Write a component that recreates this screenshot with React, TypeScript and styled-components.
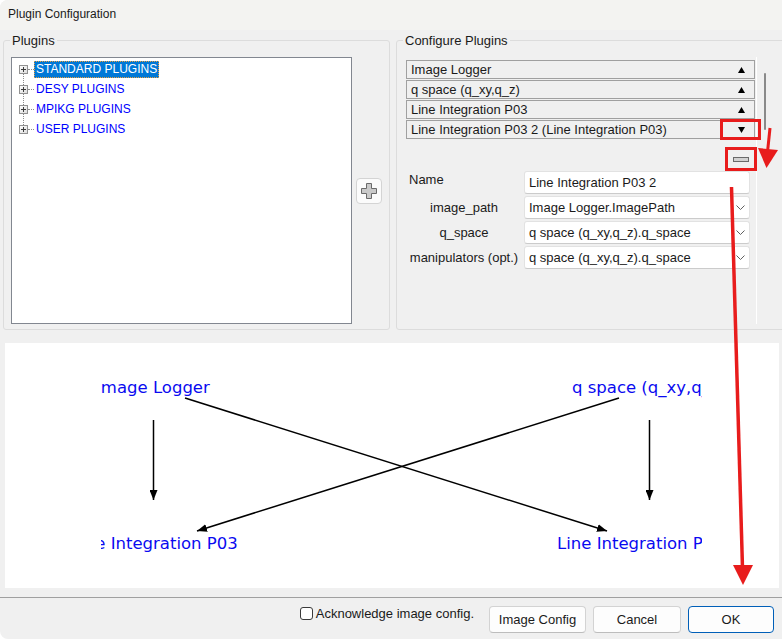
import React from 'react';
import styled, { createGlobalStyle } from 'styled-components';

const GlobalStyle = createGlobalStyle`
  html, body {
    margin: 0;
    padding: 0;
    background: #ffffff;
  }
  body {
    font-family: "Liberation Sans", Arial, sans-serif;
    font-size: 12px;
    color: #1b1b1b;
  }
  * {
    box-sizing: border-box;
  }
`;

const Window = styled.div`
  position: relative;
  width: 782px;
  height: 639px;
  background: #f0f0f0;
  border-radius: 8px 0 0 8px;
  overflow: hidden;
  display: flex;
  flex-direction: column;
`;

const TitleBar = styled.div`
  flex: none;
  height: 30px;
  display: flex;
  align-items: center;
  padding: 0 8px 2px;
  background: #f3f3f1;
  color: #1a1a1a;
`;

const TopRow = styled.div`
  flex: none;
  display: flex;
  gap: 6px;
  padding: 10px 0 0 3px;
`;

const GroupBox = styled.div<{ $width: number }>`
  flex: none;
  width: ${(p) => p.$width}px;
  height: 290px;
  border: 1px solid #dcdcdc;
  border-radius: 3px;
  display: flex;
  flex-direction: column;
  font-size: 13px;
`;

const Legend = styled.div`
  align-self: flex-start;
  margin: -8px 0 0 6px;
  padding: 0 2px;
  line-height: 16px;
  background: #f0f0f0;
  color: #1a1a1a;
`;

const PluginsBody = styled.div`
  display: flex;
  align-items: center;
  gap: 4px;
  padding: 8px 0 0 7px;
`;

const Tree = styled.div`
  width: 341px;
  height: 267px;
  background: #ffffff;
  border: 1px solid #828790;
  padding: 1px 0 0 7px;
  font-size: 12px;
`;

const TreeRow = styled.div`
  position: relative;
  height: 20px;
  display: flex;
  align-items: center;

  &:not(:last-child)::after {
    content: '';
    position: absolute;
    left: 4px;
    top: 15px;
    height: 11px;
    border-left: 1px dotted #8c8c8c;
  }
`;

const Connector = styled.span`
  width: 6px;
  height: 0;
  border-top: 1px dotted #8c8c8c;
`;

const TreeLabel = styled.span<{ $selected?: boolean }>`
  line-height: 17px;
  padding: 0 2px;
  color: ${(p) => (p.$selected ? '#ffffff' : '#0000ff')};
  background: ${(p) => (p.$selected ? '#0078d7' : 'transparent')};
  outline: ${(p) => (p.$selected ? '1px dotted #e8a040' : 'none')};
  outline-offset: -1px;
`;

const ToolButton = styled.button<{ $size: number }>`
  flex: none;
  width: ${(p) => p.$size}px;
  height: ${(p) => p.$size}px;
  padding: 0;
  display: flex;
  align-items: center;
  justify-content: center;
  background: #fbfbfb;
  border: 1px solid #d4d4d4;
  border-radius: 4px;
`;

const FlatButton = styled.button`
  width: 24px;
  height: 24px;
  margin-right: 2px;
  padding: 0;
  display: flex;
  align-items: center;
  justify-content: center;
  background: transparent;
  border: none;
`;

const ConfigureBody = styled.div`
  display: flex;
  align-items: flex-start;
  padding: 8px 0 0 7px;
`;

const ScrollArea = styled.div`
  width: 353px;
  height: 267px;
  padding: 3px 1px 0 2px;
  border-right: 1px solid #ffffff;
  display: flex;
  flex-direction: column;
`;

const ScrollThumb = styled.div`
  width: 2px;
  height: 57px;
  margin: 16px 0 0 7px;
  background: #8a8a8a;
  border-radius: 1px;
`;

const PluginRow = styled.div`
  height: 19px;
  margin-bottom: 1px;
  border: 1px solid #a0a0a0;
  display: flex;
  align-items: center;
  justify-content: space-between;
  padding: 0 9px 0 4px;
  color: #1a1a1a;
`;

const MinusRow = styled.div`
  display: flex;
  justify-content: flex-end;
  margin-top: 7px;
`;

const Form = styled.div`
  display: grid;
  grid-template-columns: 116px 226px;
  column-gap: 2px;
  row-gap: 2px;
`;

const FieldLabel = styled.div<{ $left?: boolean }>`
  align-self: ${(p) => (p.$left ? 'start' : 'center')};
  justify-self: ${(p) => (p.$left ? 'start' : 'center')};
  padding: ${(p) => (p.$left ? '1px 0 0 3px' : '0')};
  line-height: 15px;
  color: #1a1a1a;
`;

const Field = styled.div`
  height: 23px;
  background: #ffffff;
  border: 1px solid #e2e2e2;
  border-bottom-color: #cbcbcb;
  border-radius: 3px;
  display: flex;
  align-items: center;
  justify-content: space-between;
  padding: 0 4px 0 4px;
  color: #1a1a1a;
`;

const DiagramPanel = styled.div`
  flex: none;
  height: 245px;
  margin: 13px 3px 0 5px;
  background: #ffffff;
`;

const Separator = styled.div`
  flex: none;
  height: 1px;
  margin-top: 9px;
  background: #a0a0a0;
`;

const BottomBar = styled.div`
  flex: 1;
  display: flex;
  justify-content: flex-end;
  align-items: flex-start;
  gap: 7px;
  padding: 8px 8px 0 0;
  font-size: 13px;
`;

const CheckLabel = styled.label`
  display: flex;
  align-items: center;
  gap: 3px;
  margin: 1px 8px 0 0;
  line-height: 13px;
  color: #1a1a1a;
`;

const CheckBox = styled.span`
  width: 13px;
  height: 13px;
  background: #ffffff;
  border: 1px solid #3a3a3a;
  border-radius: 3px;
`;

const DialogButton = styled.button<{ $width: number; $default?: boolean }>`
  width: ${(p) => p.$width}px;
  height: 27px;
  padding: 0;
  font-family: inherit;
  font-size: 13px;
  color: #1a1a1a;
  background: #fdfdfd;
  border: 1px solid ${(p) => (p.$default ? '#005fb8' : '#d3d3d3')};
  border-bottom-color: ${(p) => (p.$default ? '#005fb8' : '#bdbdbd')};
  border-radius: 4px;
`;

const Overlay = styled.svg`
  position: absolute;
  left: 0;
  top: 0;
  pointer-events: none;
`;

const Expander = () => (
  <svg width="9" height="9" viewBox="0 0 9 9">
    <defs>
      <linearGradient id="expg" x1="0" y1="0" x2="1" y2="1">
        <stop offset="0" stopColor="#ffffff" />
        <stop offset="1" stopColor="#dcdcdc" />
      </linearGradient>
    </defs>
    <rect x="0.5" y="0.5" width="8" height="8" fill="url(#expg)" stroke="#919191" />
    <path d="M2 4.5h5M4.5 2v5" stroke="#3c3c3c" />
  </svg>
);

const Triangle = ({ up }: { up: boolean }) => (
  <svg width="7" height="6" viewBox="0 0 7 6">
    <polygon points={up ? '3.5,0 7,6 0,6' : '0,0 7,0 3.5,6'} fill="#000" />
  </svg>
);

const Chevron = () => (
  <svg width="9" height="5" viewBox="0 0 9 5">
    <path d="M0.5 0.5 L4.5 4.5 L8.5 0.5" fill="none" stroke="#5f5f5f" strokeWidth="1" />
  </svg>
);

const PlusIcon = () => (
  <svg width="16" height="16" viewBox="0 0 16 16">
    <polygon
      points="5.5,0.5 10.5,0.5 10.5,5.5 15.5,5.5 15.5,10.5 10.5,10.5 10.5,15.5 5.5,15.5 5.5,10.5 0.5,10.5 0.5,5.5 5.5,5.5"
      fill="#c9c9c9"
      stroke="#6a6a6a"
    />
  </svg>
);

const MinusIcon = () => (
  <svg width="16" height="5" viewBox="0 0 16 5">
    <rect x="0.5" y="0.5" width="15" height="4" fill="#d2d2d2" stroke="#6a6a6a" />
  </svg>
);

const treeItems = ['STANDARD PLUGINS', 'DESY PLUGINS', 'MPIKG PLUGINS', 'USER PLUGINS'];

const configured = [
  { name: 'Image Logger', up: true },
  { name: 'q space (q_xy,q_z)', up: true },
  { name: 'Line Integration P03', up: true },
  { name: 'Line Integration P03 2 (Line Integration P03)', up: false },
];

const fields = [
  { label: 'Name', value: 'Line Integration P03 2', combo: false },
  { label: 'image_path', value: 'Image Logger.ImagePath', combo: true },
  { label: 'q_space', value: 'q space (q_xy,q_z).q_space', combo: true },
  { label: 'manipulators (opt.)', value: 'q space (q_xy,q_z).q_space', combo: true },
];

// node labels are clipped by their boxes, like in the original graph view
const nodes = [
  { id: 'n1', text: 'Image Logger', x: 96, y: 393, clipX: 101, clipW: 160 },
  { id: 'n2', text: 'q space (q_xy,q_z)', x: 572, y: 393, clipX: 520, clipW: 182 },
  { id: 'n3', text: 'Line Integration P03', x: 71, y: 549, clipX: 101, clipW: 200 },
  { id: 'n4', text: 'Line Integration P03 2', x: 557, y: 549, clipX: 520, clipW: 182 },
];

const edges = [
  [185, 398, 607, 531],
  [619, 398, 197, 531],
  [153.5, 420, 153.5, 500],
  [649.5, 420, 649.5, 500],
];

const Diagram = () => (
  <svg width="774" height="245" viewBox="5 343 774 245">
    <defs>
      <marker
        id="arrow"
        markerUnits="userSpaceOnUse"
        markerWidth="10"
        markerHeight="8"
        refX="10"
        refY="4"
        orient="auto"
      >
        <path d="M0,0 L10,4 L0,8 z" fill="#000" />
      </marker>
      {nodes.map((n) => (
        <clipPath id={`clip-${n.id}`} key={n.id}>
          <rect x={n.clipX} y={n.y - 20} width={n.clipW} height={30} />
        </clipPath>
      ))}
    </defs>
    {edges.map(([x1, y1, x2, y2], i) => (
      <line
        key={i}
        x1={x1}
        y1={y1}
        x2={x2}
        y2={y2}
        stroke="#000"
        strokeWidth="1.5"
        markerEnd="url(#arrow)"
      />
    ))}
    {nodes.map((n) => (
      <text
        key={n.id}
        x={n.x}
        y={n.y}
        clipPath={`url(#clip-${n.id})`}
        fill="#0a0af0"
        fontFamily='"DejaVu Sans", sans-serif'
        fontSize="16.5"
      >
        {n.text}
      </text>
    ))}
  </svg>
);

const Annotations = () => (
  <Overlay width="782" height="639" viewBox="0 0 782 639">
    <rect x="721.5" y="120.5" width="38" height="18" fill="none" stroke="#e81c1c" strokeWidth="3" />
    <rect x="726.5" y="148.5" width="29" height="21" fill="none" stroke="#e81c1c" strokeWidth="3" />
    <line x1="770" y1="128" x2="767.5" y2="152" stroke="#e81c1c" strokeWidth="3" />
    <polygon points="758,148 778,150 766.5,168" fill="#e81c1c" />
    <line x1="731.5" y1="187" x2="742.5" y2="568" stroke="#e81c1c" strokeWidth="3.5" />
    <polygon points="733,565 753,565 743,585" fill="#e81c1c" />
  </Overlay>
);

export default function App() {
  return (
    <Window>
      <GlobalStyle />
      <TitleBar>Plugin Configuration</TitleBar>

      <TopRow>
        <GroupBox $width={387}>
          <Legend>Plugins</Legend>
          <PluginsBody>
            <Tree>
              {treeItems.map((item, i) => (
                <TreeRow key={item}>
                  <Expander />
                  <Connector />
                  <TreeLabel $selected={i === 0}>{item}</TreeLabel>
                </TreeRow>
              ))}
            </Tree>
            <ToolButton $size={26}>
              <PlusIcon />
            </ToolButton>
          </PluginsBody>
        </GroupBox>

        <GroupBox $width={400}>
          <Legend>Configure Plugins</Legend>
          <ConfigureBody>
            <ScrollArea>
              {configured.map((p) => (
                <PluginRow key={p.name}>
                  <span>{p.name}</span>
                  <Triangle up={p.up} />
                </PluginRow>
              ))}
              <MinusRow>
                <FlatButton>
                  <MinusIcon />
                </FlatButton>
              </MinusRow>
              <Form>
                {fields.map((f) => (
                  <React.Fragment key={f.label}>
                    <FieldLabel $left={!f.combo}>{f.label}</FieldLabel>
                    <Field>
                      <span>{f.value}</span>
                      {f.combo && <Chevron />}
                    </Field>
                  </React.Fragment>
                ))}
              </Form>
            </ScrollArea>
            <ScrollThumb />
          </ConfigureBody>
        </GroupBox>
      </TopRow>

      <DiagramPanel>
        <Diagram />
      </DiagramPanel>

      <Separator />

      <BottomBar>
        <CheckLabel>
          <CheckBox />
          Acknowledge image config.
        </CheckLabel>
        <DialogButton $width={97}>Image Config</DialogButton>
        <DialogButton $width={88}>Cancel</DialogButton>
        <DialogButton $width={86} $default>
          OK
        </DialogButton>
      </BottomBar>

      <Annotations />
    </Window>
  );
}
